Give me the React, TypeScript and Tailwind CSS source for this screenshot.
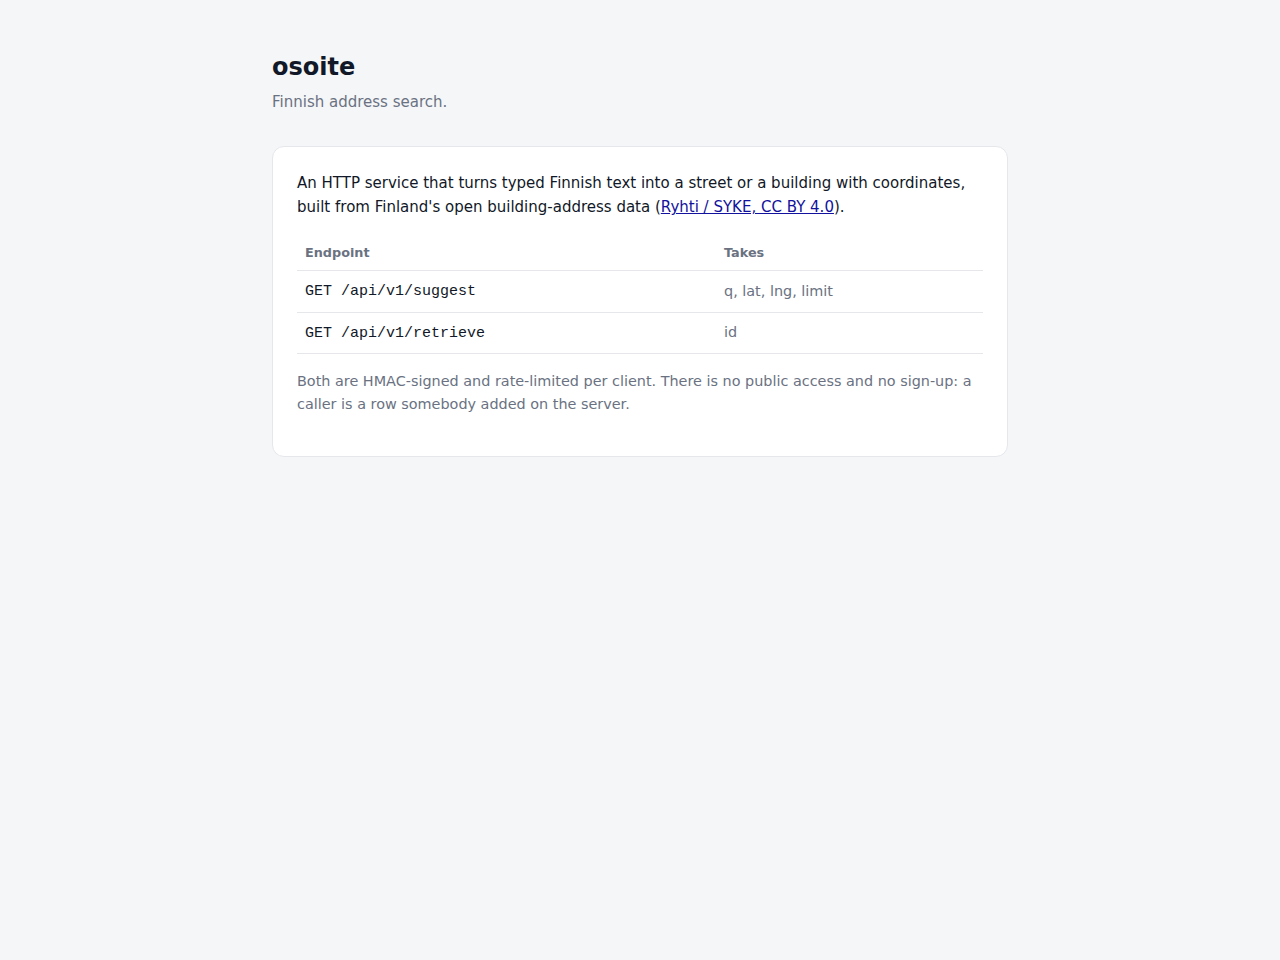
const endpoints = [
  { path: 'GET /api/v1/suggest', takes: 'q, lat, lng, limit' },
  { path: 'GET /api/v1/retrieve', takes: 'id' },
]

export default function App() {
  return (
    <div className="min-h-screen bg-[#f5f6f8] font-['DejaVu_Sans',sans-serif] text-gray-900">
      <main className="mx-auto max-w-[736px] pt-[51px]">
        <h1 className="text-2xl leading-8 font-bold text-[#111827]">osoite</h1>
        <p className="mt-[7px] text-[15px] leading-6 text-gray-500">Finnish address search.</p>

        <section className="mt-[32px] rounded-xl border border-gray-200 bg-white px-6 pt-6 pb-[40px]">
          <p className="text-[15px] leading-6 text-[#111827]">
            An HTTP service that turns typed Finnish text into a street or a building with coordinates,
            built from Finland's open building-address data (
            <a href="#" className="text-[#12129e] underline">Ryhti / SYKE, CC BY 4.0</a>).
          </p>

          <table className="mt-[16px] w-full border-collapse">
            <thead>
              <tr className="border-b border-gray-200">
                <th className="w-[419px] px-2 pb-[8px] pt-[8px] text-left text-[12.8px] font-bold text-gray-500">Endpoint</th>
                <th className="px-2 pb-[8px] pt-[8px] text-left text-[12.8px] font-bold text-gray-500">Takes</th>
              </tr>
            </thead>
            <tbody>
              {endpoints.map((ep, i) => (
                <tr key={ep.path} className={i === 0 ? 'h-[42px] border-b border-gray-200' : 'h-[41px] border-b border-gray-200'}>
                  <td className="px-2 pt-[2px] font-['Liberation_Mono',monospace] text-[15px] text-[#111827]">{ep.path}</td>
                  <td className="px-2 text-[14.4px] text-gray-500">{ep.takes}</td>
                </tr>
              ))}
            </tbody>
          </table>

          <p className="mt-[16px] text-[14.4px] leading-[23px] text-gray-500">
            Both are HMAC-signed and rate-limited per client. There is no public access and no sign-up: a
            caller is a row somebody added on the server.
          </p>
        </section>
      </main>
    </div>
  )
}
